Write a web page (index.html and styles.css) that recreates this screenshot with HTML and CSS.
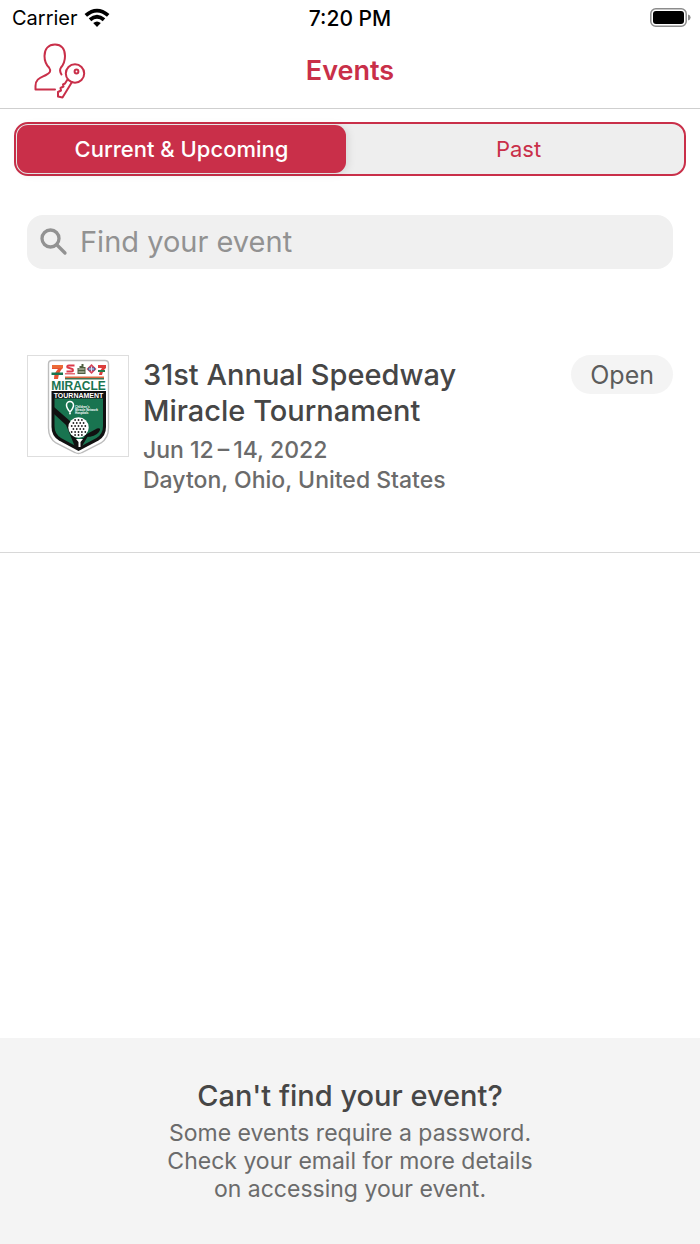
FILE: index.html
```html
<!DOCTYPE html>
<html lang="en">
<head>
<meta charset="utf-8">
<meta name="viewport" content="width=device-width, initial-scale=1">
<title>Events</title>
<link rel="stylesheet" href="styles.css">
</head>
<body>
<div class="status">
  <div class="carrier">
    <span>Carrier</span>
    <svg width="26" height="20" viewBox="0 0 26 20" aria-hidden="true">
      <g fill="none" stroke="#000" stroke-width="3.800">
        <path d="M1.800 7.400Q13 -2.200 24.200 7.400"/>
        <path d="M6 11.800Q13 5.800 20 11.800"/>
      </g>
      <path d="M9.200 15Q13 11.800 16.800 15L13 19Z"/>
    </svg>
  </div>
  <time class="clock">7:20 PM</time>
  <svg class="battery" width="42" height="20" viewBox="0 0 42 20" aria-label="Battery full" role="img">
    <rect x="0.8" y="0.8" width="35.4" height="17.4" rx="5" fill="#fff" stroke="#8c8c8c" stroke-width="1.5"/>
    <rect x="3" y="3" width="31" height="13" rx="3"/>
    <path d="M38 6.5Q40.6 7.2 40.6 9.5T38 12.5Z" fill="#8c8c8c"/>
  </svg>
</div>

<header class="navbar">
  <button class="account" type="button" aria-label="Account access">
    <svg width="52" height="56" viewBox="0 0 52 56" fill="none" stroke="#c92f49" stroke-width="2" stroke-linecap="round" stroke-linejoin="round">
      <path d="M21 46.500H1.500V43C1.500 36 6 35 12 32C16 30 17.500 28 15 24.500C12 21.500 10.500 18 10.500 13C10.500 6 14.500 1.500 21 1.500S31 6 31 13C31 17.500 30 21 27 24.500C25.500 26.500 26 29 27.500 31.500"/>
      <circle cx="41" cy="30.500" r="9.200"/>
      <circle cx="42.500" cy="28.500" r="1.900"/>
      <path d="M33.500 36.500L31 40.500L29 41.500L29.500 43.500L26.500 45L27 47.500L24 49L24 53.500L28.500 54.500L38 39"/>
    </svg>
  </button>
  <h1 class="nav-title">Events</h1>
</header>

<main class="content">
  <div class="segments" role="group" aria-label="Event period">
    <button class="segment segment-on" type="button" aria-pressed="true">Current &amp; Upcoming</button>
    <button class="segment" type="button" aria-pressed="false">Past</button>
  </div>

  <label class="search">
    <svg width="28" height="28" viewBox="0 0 28 28" fill="none" stroke="#929292" stroke-width="3.300" stroke-linecap="round" aria-hidden="true">
      <circle cx="10.500" cy="10.500" r="8.500"/>
      <path d="M17 17L25 25"/>
    </svg>
    <input class="search-input" type="search" placeholder="Find your event" aria-label="Find your event">
  </label>

  <article class="event">
    <div class="thumb">
      <svg width="100" height="100" viewBox="0 0 100 100" role="img" aria-label="Miracle Tournament logo">
        <path d="M24 4.500H77Q80.500 4.500 80.500 8V72Q80.500 82 73 87L54 96.500Q50.500 98.500 47 96.500L28 87Q20.500 82 20.500 72V8Q20.500 4.500 24 4.500Z" fill="#fff" stroke="#bdbdbd" stroke-width="1.400"/>
        <path d="M23.500 35H78V71Q78 80 70.500 84.500L50.500 95L31 84.500Q23.500 80 23.500 71Z" fill="#111"/>
        <path d="M26.500 42.500H75V70Q75 78 68.500 82L50.500 91.500L33 82Q26.500 78 26.500 70Z" fill="#197450"/>
        <path d="M26 51L42 65L42 78L51 84L60 80L52 93.500L47 91L43 81L38 69L26 58Z" fill="#111"/>
        <g>
          <path d="M24 9H35V12Q31 15 30 23H26Q26 17 30 13H24Z" fill="#e65332"/>
          <path d="M24 9H35V12H24Z" fill="#eb6a37"/>
          <path d="M23.500 16.500H35V19H23.500Z" fill="#197450"/>
          <path d="M70 9H78V12Q75 14 74 19H71Q71 15 74 12H70Z" fill="#dc3e3c"/>
          <path d="M70 14H77V16H70Z" fill="#277a4d"/>
          <path d="M46.500 9.500H41Q38.500 9.500 39.500 11.500L44.500 13Q46 15.500 43 15.500H38.500" fill="none" stroke="#dc3a4a" stroke-width="2"/>
          <path d="M37 17H47V18.500H37Z" fill="#e66c76"/>
          <path d="M49.500 12H51.500V10H53.500V8H55.500V11H57.500V18H49.500Z" fill="#4f5d40"/>
          <path d="M50.500 13H56.500M50.500 16H56.500" stroke="#d9ddc9"/>
          <path d="M63.500 8L68.500 13L63.500 18L58.500 13Z" fill="#d94357"/>
          <path d="M60 11.500H67V14.500H60Z" fill="#455fa1"/>
          <path d="M63.500 10.500V15.500M61 13H66" stroke="#dfe2f0"/>
        </g>
        <path d="M37 20.500H76V22H37Z" fill="#dd6941"/>
        <path d="M37 22H76V23.500H37Z" fill="#427454"/>
        <text class="logo-name" x="50.500" y="33.500" text-anchor="middle">MIRACLE</text>
        <text class="logo-sub" x="50.500" y="41.500" text-anchor="middle">TOURNAMENT</text>
        <path d="M42 56C39 52.500 38.500 51.500 38.500 49A3.500 3.500 0 0 1 45.500 49C45.500 51.500 45 52.500 42 56Z" fill="none" stroke="#fff" stroke-width="1.500"/>
        <circle cx="42" cy="57.500" r="1" fill="#fff"/>
        <g class="logo-small">
          <text x="47" y="52">Children's</text>
          <text x="47" y="55">Miracle Network</text>
          <text x="47" y="58">Hospitals</text>
        </g>
        <path d="M53 91L57 79L69 72.500Q74 71.500 71 76Q67 81 58 81L52 93Z" fill="#111"/>
        <circle cx="50.500" cy="71.500" r="10.200" fill="#fff"/>
        <g stroke="#222" stroke-width="1.800" stroke-linecap="round" stroke-dasharray="0 3.400">
          <path d="M47.100 64H55.500M45.400 67H57.500M43.700 70H58.500M45.400 73H57.500M43.700 76H58.500M47.100 79H55.500"/>
        </g>
        <path d="M48 83H55L52.500 86V91H50.500V86Z" fill="#fff"/>
      </svg>
    </div>
    <div class="event-info">
      <h2 class="title">31st Annual Speedway<br>Miracle Tournament</h2>
      <p class="event-meta">Jun 12&#8201;–&#8201;14, 2022</p>
      <p class="event-meta">Dayton, Ohio, United States</p>
    </div>
    <button class="open" type="button">Open</button>
  </article>
</main>

<footer class="help">
  <h2 class="title">Can't find your event?</h2>
  <p class="help-text">Some events require a password.<br>Check your email for more details<br>on accessing your event.</p>
</footer>
</body>
</html>
```

FILE: styles.css
```css
* {
  box-sizing: border-box;
}

body {
  margin: 0;
  min-height: 100vh;
  display: flex;
  flex-direction: column;
  background: #fff;
  color: #464646;
  font-family: Inter, "Liberation Sans", sans-serif;
}

h1,
h2,
p {
  margin: 0;
}

button {
  margin: 0;
  padding: 0;
  border: 0;
  background: none;
  color: inherit;
  font: inherit;
  cursor: pointer;
}

svg {
  display: block;
  flex: none;
}

.status {
  display: grid;
  grid-template-columns: 1fr auto 1fr;
  align-items: center;
  height: 36px;
  padding: 0 8px;
  color: #000;
  font-size: 20px;
}

.carrier {
  display: flex;
  align-items: center;
  gap: 6px;
  padding-left: 4px;
}

.clock {
  font-size: 21px;
  font-weight: 500;
}

.battery {
  justify-self: end;
}

.navbar {
  display: grid;
  grid-template-columns: 1fr auto 1fr;
  align-items: center;
  height: 73px;
  padding: 0 34px 3px;
  border-bottom: 1px solid #cfcfcf;
}

.account {
  justify-self: start;
}

.nav-title {
  color: #c92f49;
  font-size: 27px;
  font-weight: 600;
}

.content {
  flex: 1;
}

.segments {
  display: grid;
  grid-template-columns: 1fr 1fr;
  gap: 8px;
  height: 54px;
  margin: 13px 14px 0;
  padding: 1px;
  border: 2px solid #c92f49;
  border-radius: 14px;
  background: #eee;
}

.segment {
  border-radius: 11px;
  color: #c92f49;
  font-size: 22px;
}

.segment-on {
  background: #c92f49;
  color: #fff;
  font-weight: 500;
  box-shadow: 2px 1px 8px #0000001a;
}

.search {
  display: flex;
  align-items: center;
  gap: 12px;
  height: 54px;
  margin: 39px 27px 0;
  padding: 0 13px;
  border-radius: 16px;
  background: #f0f0f0;
}

.search-input {
  flex: 1;
  min-width: 0;
  padding: 0 0 2px;
  border: 0;
  outline: 0;
  background: none;
  color: #464646;
  font: 400 29px Inter, "Liberation Sans", sans-serif;
}

.search-input::placeholder {
  color: #929292;
}

.event {
  display: flex;
  align-items: flex-start;
  gap: 14px;
  margin-top: 86px;
  padding: 0 27px 57px;
  border-bottom: 1px solid #d8d8d8;
}

.thumb {
  border: 1px solid #dedede;
}

.event-info {
  flex: 1;
  padding-top: 2px;
}

.title {
  font-size: 29px;
  font-weight: 500;
  line-height: 36px;
}

.event-info .title {
  margin-bottom: 6px;
}

.event-meta {
  color: #6b6b6b;
  font-size: 23px;
  font-weight: 500;
  line-height: 30px;
}

.open {
  height: 39px;
  padding: 0 19px;
  border-radius: 20px;
  background: #f4f4f4;
  color: #5c5c5c;
  font-size: 25px;
}

.help {
  padding: 40px 20px 41px;
  background: #f4f4f4;
  text-align: center;
}

.help-text {
  color: #6b6b6b;
  font-size: 23px;
  line-height: 28px;
  padding-top: 5px;
}

.logo-name,
.logo-sub,
.logo-small {
  font-family: "Liberation Sans", sans-serif;
  font-weight: 700;
}

.logo-name {
  fill: #197450;
  font-size: 12px;
}

.logo-sub {
  fill: #fff;
  font-size: 7px;
}

.logo-small {
  fill: #fff;
  font-size: 3px;
}
```
